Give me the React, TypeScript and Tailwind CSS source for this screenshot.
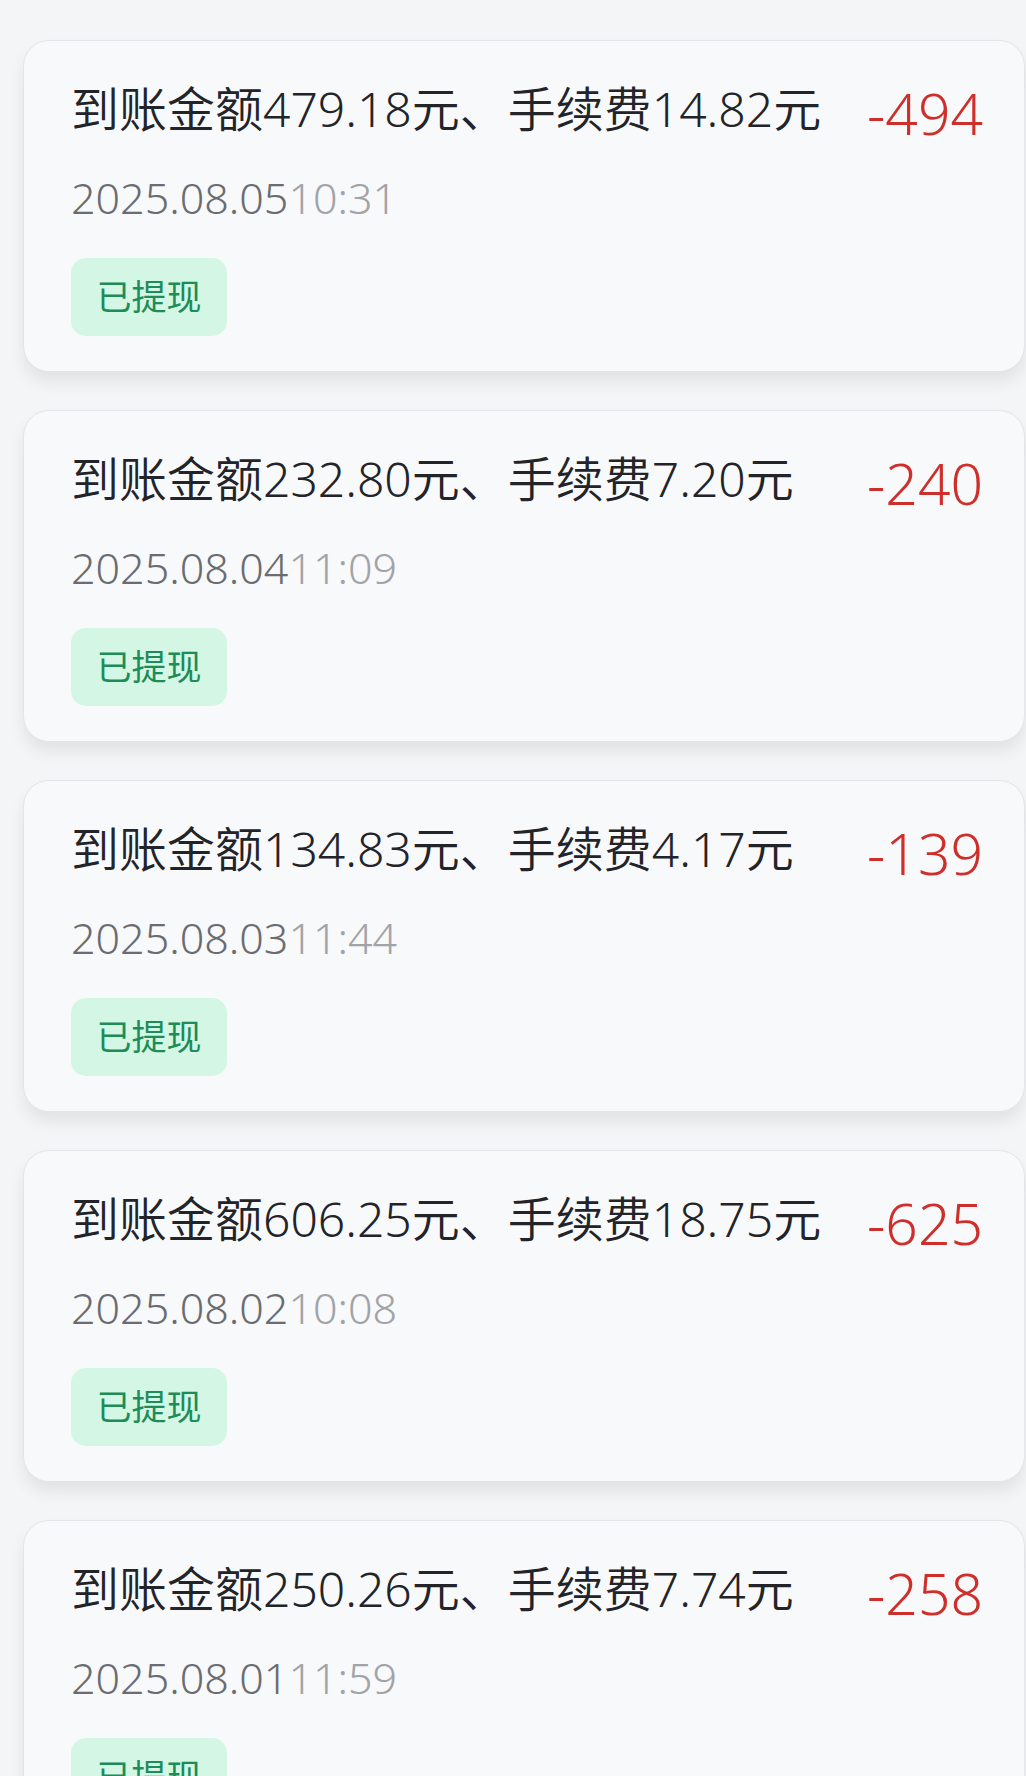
const records = [
  { arrive: '479.18', fee: '14.82', date: '2025.08.05', time: '10:31', amount: '-494' },
  { arrive: '232.80', fee: '7.20', date: '2025.08.04', time: '11:09', amount: '-240' },
  { arrive: '134.83', fee: '4.17', date: '2025.08.03', time: '11:44', amount: '-139' },
  { arrive: '606.25', fee: '18.75', date: '2025.08.02', time: '10:08', amount: '-625' },
  { arrive: '250.26', fee: '7.74', date: '2025.08.01', time: '11:59', amount: '-258' },
]

const App = () => {
  return (
    <div className="w-full h-[1776px] overflow-hidden bg-[#f4f5f7] pt-[40px] pl-[23px] pr-[1px] font-['Noto_Sans','Noto_Sans_CJK_SC',sans-serif]">
      <div className="flex flex-col gap-y-[38px]">
        {records.map((item) => (
          <div
            key={item.date}
            className="h-[332px] shrink-0 rounded-[26px] border border-[#e4e5e8] bg-[#f8f9fa] shadow-[0_10px_16px_rgba(0,0,0,0.075)] pt-[40px] pl-[47px] pr-[41px] flex flex-row items-start"
          >
            <div className="flex-1 flex flex-col">
              <p className="text-[48px] leading-[56px] font-[350] text-[#222429] whitespace-nowrap">
                到账金额{item.arrive}元、手续费{item.fee}元
              </p>
              <p className="mt-[37px] text-[43px] leading-[48px] font-[350] whitespace-nowrap">
                <span className="text-[#6b6c71]">{item.date}</span>
                <span className="text-[#a2a3a8]">{item.time}</span>
              </p>
              <div className="mt-[36px] w-[156px] h-[78px] rounded-[15px] bg-[#d3f7e4] flex items-center justify-center">
                <span className="text-[35px] text-[#1d8c58]">已提现</span>
              </div>
            </div>
            <p className="mt-[-1px] text-[57px] leading-[66px] font-light text-[#cf2f2a]">{item.amount}</p>
          </div>
        ))}
      </div>
    </div>
  )
}

export default App
